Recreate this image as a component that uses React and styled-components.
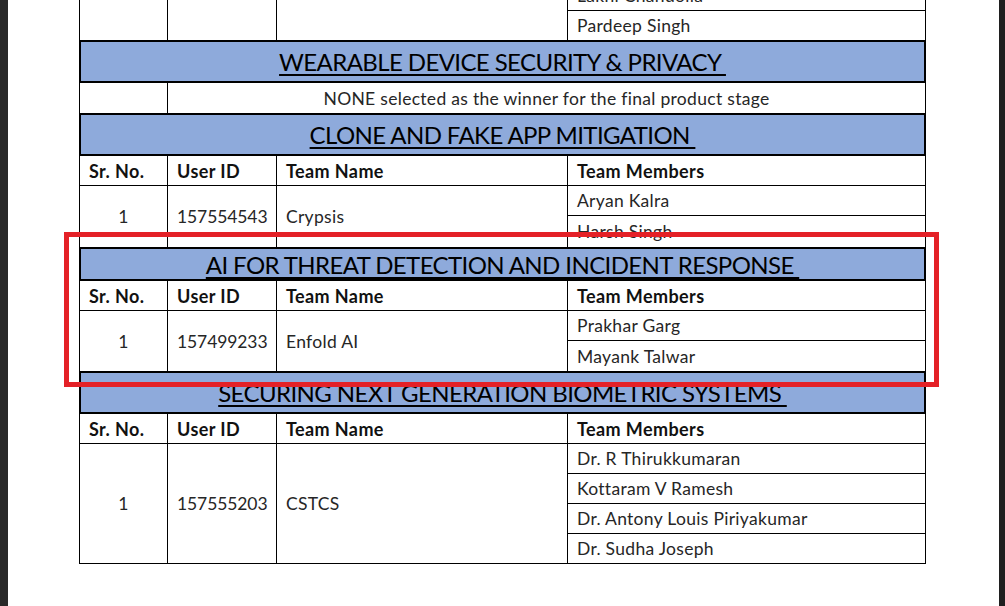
import React from 'react';
import styled, { createGlobalStyle } from 'styled-components';

const GlobalStyle = createGlobalStyle`
  html, body {
    margin: 0;
    padding: 0;
    background: #ffffff;
  }
  body {
    font-family: Lato, "Open Sans", sans-serif;
  }
`;

const Viewer = styled.div`
  position: relative;
  display: flex;
  width: 1005px;
  height: 606px;
  overflow: hidden;
`;

const Gutter = styled.div`
  flex: 0 0 ${(p) => p.$w}px;
  background: ${(p) => p.$bg};
`;

const Page = styled.div`
  flex: 1;
  background: #ffffff;
  overflow: hidden;
`;

const Sheet = styled.div`
  width: 847px;
  margin: -19px 0 0 71px;
`;

const Band = styled.div`
  box-sizing: border-box;
  height: ${(p) => p.$h}px;
  background: #8eaadb;
  border: 2px solid #000;
  border-top-width: 1px;
  display: flex;
  align-items: center;
  justify-content: center;
  font-size: 24px;
  letter-spacing: -0.6px;
  color: #000;
`;

const BandTitle = styled.span`
  text-decoration: underline;
  text-decoration-thickness: 2px;
  text-underline-offset: 3px;
  white-space: pre;
`;

const Row = styled.div`
  display: grid;
  grid-template-columns: 88px 109px 291px 358px;
  border-left: 1px solid #000;
`;

const Cell = styled.div`
  box-sizing: border-box;
  grid-column: span ${(p) => p.$span || 1};
  height: ${(p) => (p.$h ? `${p.$h}px` : 'auto')};
  border-right: 1px solid #000;
  border-bottom: 1px solid #000;
  display: flex;
  align-items: center;
  justify-content: ${(p) => (p.$center ? 'center' : 'flex-start')};
  padding: 0 9px;
  font-size: ${(p) => (p.$bold ? 18 : 17.5)}px;
  letter-spacing: ${(p) => (p.$bold ? 0.4 : p.$num ? -0.1 : 0.3)}px;
  font-weight: ${(p) => (p.$bold ? 700 : 400)};
  color: ${(p) => (p.$bold ? '#111' : '#262626')};
  white-space: nowrap;
`;

const Members = styled.div`
  display: flex;
  flex-direction: column;
`;

const Highlight = styled.div`
  position: absolute;
  left: 64px;
  top: 232px;
  width: 875px;
  height: 155px;
  box-sizing: border-box;
  border: 5px solid #e42127;
  pointer-events: none;
`;

function HeaderRow() {
  return (
    <Row>
      <Cell $h={30} $bold>Sr. No.</Cell>
      <Cell $h={30} $bold>User ID</Cell>
      <Cell $h={30} $bold>Team Name</Cell>
      <Cell $h={30} $bold>Team Members</Cell>
    </Row>
  );
}

function TeamRow({ sr, id, team, members }) {
  return (
    <Row>
      <Cell $center>{sr}</Cell>
      <Cell $num>{id}</Cell>
      <Cell>{team}</Cell>
      <Members>
        {members.map((m) => (
          <Cell key={m.name} $h={m.h}>{m.name}</Cell>
        ))}
      </Members>
    </Row>
  );
}

function Title({ children, h }) {
  return (
    <Band $h={h}>
      <BandTitle>{children + ' '}</BandTitle>
    </Band>
  );
}

export default function App() {
  return (
    <>
      <GlobalStyle />
      <Viewer>
        <Gutter $w={8} $bg="#292929" />
        <Page>
          <Sheet>
            <TeamRow
              sr=""
              id=""
              team=""
              members={[
                { name: 'Lakhi Chandolia', h: 30 },
                { name: 'Pardeep Singh', h: 30 },
              ]}
            />
            <Title h={42}>WEARABLE DEVICE SECURITY &amp; PRIVACY</Title>
            <Row>
              <Cell $h={31} />
              <Cell $h={31} $span={3} $center>
                NONE selected as the winner for the final product stage
              </Cell>
            </Row>
            <Title h={42}>CLONE AND FAKE APP MITIGATION</Title>
            <HeaderRow />
            <TeamRow
              sr="1"
              id="157554543"
              team="Crypsis"
              members={[
                { name: 'Aryan Kalra', h: 30 },
                { name: 'Harsh Singh', h: 32 },
              ]}
            />
            <Title h={33}>AI FOR THREAT DETECTION AND INCIDENT RESPONSE</Title>
            <HeaderRow />
            <TeamRow
              sr="1"
              id="157499233"
              team="Enfold AI"
              members={[
                { name: 'Prakhar Garg', h: 30 },
                { name: 'Mayank Talwar', h: 31 },
              ]}
            />
            <Title h={42}>SECURING NEXT GENERATION BIOMETRIC SYSTEMS</Title>
            <HeaderRow />
            <TeamRow
              sr="1"
              id="157555203"
              team="CSTCS"
              members={[
                { name: 'Dr. R Thirukkumaran', h: 30 },
                { name: 'Kottaram V Ramesh', h: 30 },
                { name: 'Dr. Antony Louis Piriyakumar', h: 30 },
                { name: 'Dr. Sudha Joseph', h: 30 },
              ]}
            />
          </Sheet>
        </Page>
        <Gutter $w={6} $bg="#1f1f1f" />
        <Highlight />
      </Viewer>
    </>
  );
}
